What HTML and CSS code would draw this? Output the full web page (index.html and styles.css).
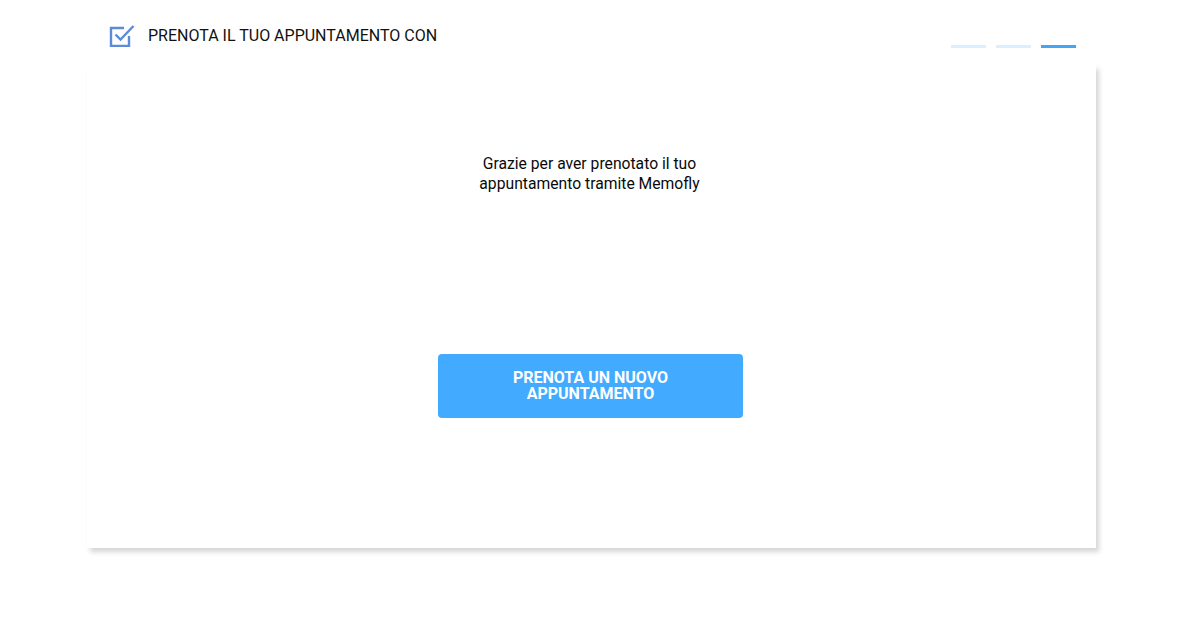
FILE: index.html
```html
<!DOCTYPE html>
<html lang="it">
<head>
  <meta charset="UTF-8" />
  <meta name="viewport" content="width=device-width, initial-scale=1.0"/>
  <title>Prenota il tuo appuntamento</title>
  <link rel="stylesheet" href="styles.css">
</head>
<body>
  <div class="page">
    <div class="top">
      <div class="title">
        <svg class="title-icon" width="26" height="24" viewBox="0 0 26 24">
          <path d="M20 13v10H2V5h13" fill="none" stroke="#5b8bd9" stroke-width="2.4"/>
          <path d="M6.5 11.5l5 5L24.5 3" fill="none" stroke="#5b8bd9" stroke-width="2.4"/>
        </svg>
        <span>PRENOTA IL TUO APPUNTAMENTO CON</span>
      </div>
      <div class="steps">
        <span class="step"></span>
        <span class="step"></span>
        <span class="step active"></span>
      </div>
    </div>

    <div class="card">
      <p class="message">Grazie per aver prenotato il tuo<br>appuntamento tramite Memofly</p>
      <button class="new-btn">PRENOTA UN NUOVO<br>APPUNTAMENTO</button>
    </div>
  </div>
</body>
</html>
```

FILE: styles.css
```css
body {
  margin: 0;
  font-family: Roboto, 'Liberation Sans', sans-serif;
  background: #fff;
  color: #111;
}

.page {
  width: 1009px;
  margin-left: 87px;
  padding-bottom: 40px;
}

.top {
  display: flex;
  justify-content: space-between;
  height: 65px;
  padding: 0 20px 0 22px;
  box-sizing: border-box;
}

.title {
  display: flex;
  align-items: center;
  gap: 13px;
  margin-top: 23px;
  height: 24px;
  font-size: 16px;
  color: #111;
}

.title-icon {
  display: block;
}

.steps {
  display: flex;
  gap: 10px;
  margin-top: 45px;
}

.step {
  display: block;
  width: 35px;
  height: 3px;
  background: #dcefff;
}

.step.active {
  background: #42a5f5;
}

.card {
  height: 483px;
  background: #fff;
  box-shadow: 3px 4px 5px rgba(0, 0, 0, 0.17);
  padding-top: 89px;
  box-sizing: border-box;
  text-align: center;
}

.message {
  margin: 0 0 0 -4px;
  font-size: 15.7px;
  line-height: 20px;
  color: #0a0a0a;
}

.new-btn {
  display: block;
  width: 305px;
  height: 64px;
  margin: 160px auto 0 351px;
  border: none;
  border-radius: 4px;
  background: #42abff;
  color: #fff;
  font-family: Roboto, 'Liberation Sans', sans-serif;
  font-weight: bold;
  font-size: 16px;
  line-height: 16.5px;
  cursor: pointer;
}
```
